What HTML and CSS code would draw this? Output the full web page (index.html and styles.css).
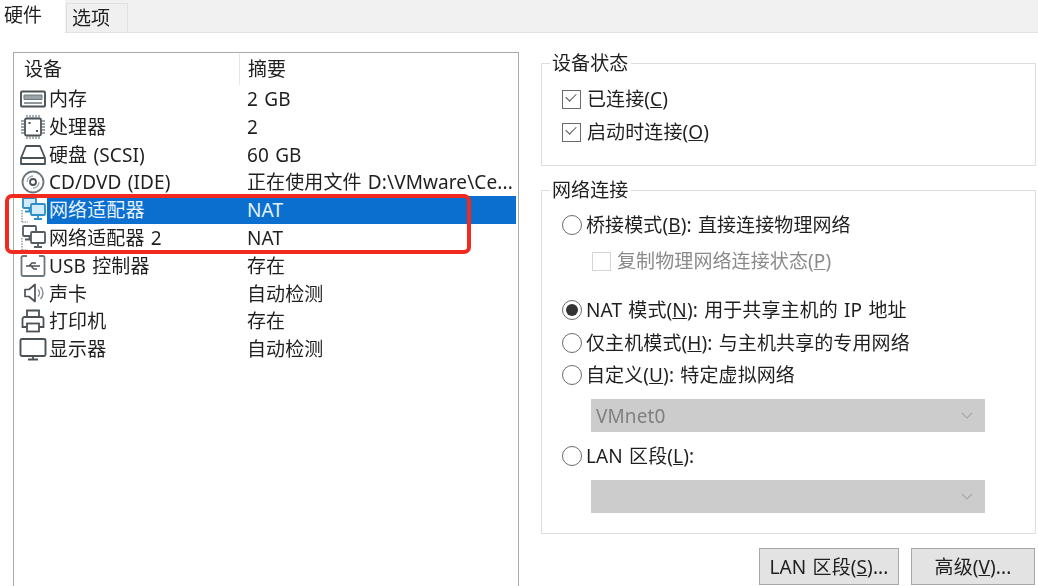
FILE: index.html
```html
<!DOCTYPE html>
<html lang="zh-CN">
<head>
  <meta charset="UTF-8" />
  <title>虚拟机设置</title>
  <link rel="stylesheet" href="styles.css">
</head>
<body>
  <svg class="defs" width="0" height="0">
    <symbol id="ico-net" viewBox="0 0 28 28">
      <path d="M3 14v12M3 26h6" fill="none" stroke="#9aa0a6" stroke-width="1.600" stroke-dasharray="1.500 1.200"/>
      <rect x="4" y="2" width="13" height="10" rx="1" fill="var(--net-fill)" stroke="currentColor" stroke-width="1.800"/>
      <path d="M10.500 12v3M6 15.500h8" fill="none" stroke="currentColor" stroke-width="1.800"/>
      <rect x="12" y="8" width="14" height="11" rx="1" fill="var(--net-fill)" stroke="currentColor" stroke-width="1.800"/>
      <path d="M19 19v3M15 23h8" fill="none" stroke="currentColor" stroke-width="1.800"/>
    </symbol>
  </svg>

  <div class="tabs">
    <div class="tab active">硬件</div>
    <div class="tab">选项</div>
  </div>

  <main class="content">
    <section class="devices">
      <div class="list-head">
        <div class="col-name">设备</div>
        <div class="col-sum">摘要</div>
      </div>

      <div class="row">
        <svg class="ico" viewBox="0 0 28 28"><rect x="2" y="6.500" width="24" height="15" rx="1" fill="none" stroke="#4b5257" stroke-width="1.900"/><path d="M5 10h18v4.500H5z" fill="#9aa3a8" stroke="#6d767b" stroke-width="1"/><path d="M5 18h18" stroke="#6d767b" stroke-width="1.500"/></svg>
        <div class="cell"><span class="col-name">内存</span><span class="col-sum">2 GB</span></div>
      </div>
      <div class="row">
        <svg class="ico" viewBox="0 0 28 28"><rect x="6" y="5.500" width="16" height="17" rx="1.500" fill="none" stroke="#4b5257" stroke-width="1.800"/><path d="M8 2v3M11 2v3M14 2v3M17 2v3M20 2v3M8 23v3M11 23v3M14 23v3M17 23v3M20 23v3M2 8h3M2 11h3M2 14h3M2 17h3M2 20h3M23 8h3M23 11h3M23 14h3M23 17h3M23 20h3" stroke="#7d858a" stroke-width="1.300"/><path d="M9.500 9h2v2h-2zM17 17h2v2h-2z" fill="#4b5257"/></svg>
        <div class="cell"><span class="col-name">处理器</span><span class="col-sum">2</span></div>
      </div>
      <div class="row">
        <svg class="ico" viewBox="0 0 28 28"><path d="M7 5h14l5 12v6H2v-6zM2 17h24" fill="none" stroke="#4b5257" stroke-width="1.800" stroke-linejoin="round"/></svg>
        <div class="cell"><span class="col-name">硬盘 (SCSI)</span><span class="col-sum">60 GB</span></div>
      </div>
      <div class="row">
        <svg class="ico" viewBox="0 0 28 28"><circle cx="14" cy="14" r="10.500" fill="none" stroke="#6d767b" stroke-width="1.800"/><circle cx="14" cy="14" r="3" fill="none" stroke="#4b5257" stroke-width="1.800"/><path d="M8 14a6 6 0 0 1 6-6M14 20a6 6 0 0 0 6-6" fill="none" stroke="#a4abb0" stroke-width="1.300"/></svg>
        <div class="cell"><span class="col-name">CD/DVD (IDE)</span><span class="col-sum">正在使用文件 D:\VMware\Ce...</span></div>
      </div>
      <div class="row selected">
        <svg class="ico net-on"><use href="#ico-net"/></svg>
        <div class="cell"><span class="col-name">网络适配器</span><span class="col-sum">NAT</span></div>
      </div>
      <div class="row">
        <svg class="ico net-off"><use href="#ico-net"/></svg>
        <div class="cell"><span class="col-name">网络适配器 2</span><span class="col-sum">NAT</span></div>
      </div>
      <div class="row">
        <svg class="ico" viewBox="0 0 28 28"><path d="M8 4H4a1.500 1.500 0 0 0-1.500 1.500v17A1.500 1.500 0 0 0 4 24h20a1.500 1.500 0 0 0 1.500-1.500v-17A1.500 1.500 0 0 0 24 4h-4" fill="none" stroke="#6d767b" stroke-width="1.800"/><path d="M7 14h14M10 14l3-3h4M12 14l3 3h3" fill="none" stroke="#4b5257" stroke-width="1.400"/></svg>
        <div class="cell"><span class="col-name">USB 控制器</span><span class="col-sum">存在</span></div>
      </div>
      <div class="row">
        <svg class="ico" viewBox="0 0 28 28"><path d="M6 10.500h4l6-5v17l-6-5H6z" fill="none" stroke="#4b5257" stroke-width="1.700" stroke-linejoin="round"/><path d="M19 10.500a5 5 0 0 1 0 7M21.500 8a8.500 8.500 0 0 1 0 12" fill="none" stroke="#8a9196" stroke-width="1.500"/></svg>
        <div class="cell"><span class="col-name">声卡</span><span class="col-sum">自动检测</span></div>
      </div>
      <div class="row">
        <svg class="ico" viewBox="0 0 28 28"><path d="M8 10V3.500h12V10M8 20H3.500v-8a2 2 0 0 1 2-2h17a2 2 0 0 1 2 2v8H20" fill="none" stroke="#4b5257" stroke-width="1.800"/><rect x="8" y="16.500" width="12" height="8" fill="none" stroke="#4b5257" stroke-width="1.800"/></svg>
        <div class="cell"><span class="col-name">打印机</span><span class="col-sum">存在</span></div>
      </div>
      <div class="row">
        <svg class="ico" viewBox="0 0 28 28"><rect x="1.500" y="4" width="25" height="17" rx="1.500" fill="none" stroke="#4b5257" stroke-width="1.900"/><path d="M9 24.500h10M14 21v3" stroke="#4b5257" stroke-width="1.800"/></svg>
        <div class="cell"><span class="col-name">显示器</span><span class="col-sum">自动检测</span></div>
      </div>
    </section>

    <section class="settings">
      <fieldset class="group status-group">
        <legend>设备状态</legend>
        <label class="opt"><span class="check on"></span>已连接(<u>C</u>)</label>
        <label class="opt second"><span class="check on"></span>启动时连接(<u>O</u>)</label>
      </fieldset>

      <fieldset class="group net-group">
        <legend>网络连接</legend>
        <label class="opt"><span class="radio"></span>桥接模式(<u>B</u>): 直接连接物理网络</label>
        <label class="opt sub disabled"><span class="check"></span>复制物理网络连接状态(<u>P</u>)</label>
        <label class="opt nat"><span class="radio on"></span>NAT 模式(<u>N</u>): 用于共享主机的 IP 地址</label>
        <label class="opt host"><span class="radio"></span>仅主机模式(<u>H</u>): 与主机共享的专用网络</label>
        <label class="opt"><span class="radio"></span>自定义(<u>U</u>): 特定虚拟网络</label>
        <div class="select"><span>VMnet0</span><svg class="arrow" viewBox="0 0 12 7"><path d="M1 1l5 5 5-5" fill="none" stroke="#a8a8a8" stroke-width="1.200"/></svg></div>
        <label class="opt lan"><span class="radio"></span>LAN 区段(<u>L</u>):</label>
        <div class="select"><span></span><svg class="arrow" viewBox="0 0 12 7"><path d="M1 1l5 5 5-5" fill="none" stroke="#a8a8a8" stroke-width="1.200"/></svg></div>
      </fieldset>

      <div class="actions">
        <button class="btn lan-btn">LAN 区段(<u>S</u>)...</button>
        <button class="btn adv-btn">高级(<u>V</u>)...</button>
      </div>
    </section>
  </main>

  <div class="callout"></div>
</body>
</html>
```

FILE: styles.css
```css
:root {
  --text-color: #1f1f1f;
  --line-color: #dedede;
  --select-color: #0a6fcf;
}
html, body {
  height: 586px;
  overflow: hidden;
}
body {
  margin: 0;
  display: flex;
  flex-direction: column;
  position: relative;
  background: #fff;
  color: var(--text-color);
  font-family: "Noto Sans", "Noto Sans CJK SC", sans-serif;
  font-size: 19px;
  letter-spacing: 0.1px;
  word-spacing: 1.200px;
  line-height: 28px;
  filter: blur(0.4px);
}
.defs {
  position: absolute;
}
.tabs {
  display: flex;
  align-items: flex-end;
  height: 33px;
  flex: none;
  background: #f1f1f1;
  border-bottom: 1px solid #e2e2e2;
  box-sizing: border-box;
}
.tab {
  width: 62px;
  height: 29px;
  box-sizing: border-box;
  padding-left: 5px;
  line-height: 29px;
  background: #f0f0f0;
  border: 1px solid #e0e0e0;
  border-bottom: none;
  margin-left: 1px;
}
.tab.active {
  width: 65px;
  height: 33px;
  margin: 0 0 -1px;
  padding-left: 4px;
  line-height: 30px;
  background: #fff;
  border: none;
}
.content {
  flex: 1;
  display: flex;
  align-items: stretch;
  min-height: 0;
}
.devices {
  width: 506px;
  box-sizing: border-box;
  margin: 19px 0 0 13px;
  padding: 1px 2px 0 1px;
  border: 1.500px solid #a9a9a9;
  border-bottom: none;
}
.list-head {
  display: flex;
  height: 31px;
  line-height: 31px;
}
.list-head .col-name {
  width: 225px;
  padding-left: 9px;
  box-sizing: border-box;
  border-right: 1px solid #e6e6e6;
}
.list-head .col-sum {
  padding-left: 8px;
}
.row {
  display: flex;
  align-items: center;
  height: 27.800px;
}
.ico {
  width: 28px;
  height: 28px;
  flex: none;
  margin-left: 4px;
}
.net-on {
  color: #2c8fc9;
  --net-fill: #d3ebf8;
}
.net-off {
  color: #555c61;
  --net-fill: #fff;
}
.cell {
  flex: 1;
  display: flex;
  height: 100%;
  white-space: nowrap;
}
.cell .col-name {
  width: 198px;
  padding-left: 2px;
  flex: none;
}
.selected .cell {
  background: var(--select-color);
  color: #e6f2fb;
}
.settings {
  width: 495px;
  margin: 18px 0 0 22px;
  display: flex;
  flex-direction: column;
}
.group {
  margin: 0;
  padding: 8px 0 0 20px;
  border: 1px solid var(--line-color);
  min-width: 0;
}
.group legend {
  margin-left: -12px;
  padding: 0 3px 0 2px;
  line-height: 24px;
}
.status-group {
  padding-bottom: 17px;
}
.net-group {
  margin-top: 12px;
  padding-top: 7px;
  padding-bottom: 20px;
}
.opt {
  display: flex;
  align-items: center;
  height: 32px;
  white-space: pre;
}
.opt.second {
  margin-top: 1px;
}
.opt.sub {
  margin: 4px 0 0 30px;
}
.opt.nat {
  margin-top: 17px;
}
.opt.host {
  margin-top: 1px;
}
.opt.lan {
  margin-top: 8px;
}
.disabled {
  color: #8a8a8a;
}
.check {
  width: 19px;
  height: 19px;
  box-sizing: border-box;
  border: 1.500px solid #6a6a6a;
  margin-right: 6px;
  flex: none;
  position: relative;
}
.check.on::after {
  content: "";
  position: absolute;
  left: 3px;
  top: 2px;
  width: 9px;
  height: 5px;
  border-left: 1.500px solid #555;
  border-bottom: 1.500px solid #555;
  transform: rotate(-45deg);
}
.disabled .check {
  border-color: #d4d4d4;
}
.radio {
  width: 20px;
  height: 20px;
  box-sizing: border-box;
  border: 1.500px solid #6a6a6a;
  border-radius: 50%;
  margin-right: 4px;
  flex: none;
  position: relative;
}
.radio.on::after {
  content: "";
  position: absolute;
  inset: 3px;
  border-radius: 50%;
  background: #333;
}
.select {
  display: flex;
  align-items: center;
  justify-content: space-between;
  width: 394px;
  height: 33px;
  box-sizing: border-box;
  margin: 8px 0 0 29px;
  padding: 0 12px 0 5px;
  background: #cccccc;
  color: #808080;
}
.arrow {
  width: 12px;
  height: 7px;
}
.actions {
  display: flex;
  justify-content: flex-end;
  gap: 12px;
  margin: 14px 1px 0 0;
}
.btn {
  height: 37px;
  padding: 0;
  font: inherit;
  letter-spacing: inherit;
  word-spacing: inherit;
  color: var(--text-color);
  background: #e3e3e3;
  border: 1.500px solid #a8a8a8;
}
.lan-btn {
  width: 140px;
}
.adv-btn {
  width: 124px;
}
.callout {
  position: absolute;
  left: 5px;
  top: 194px;
  width: 466px;
  height: 60px;
  box-sizing: border-box;
  border: 4px solid #f02a1e;
  border-radius: 7px;
}
```
